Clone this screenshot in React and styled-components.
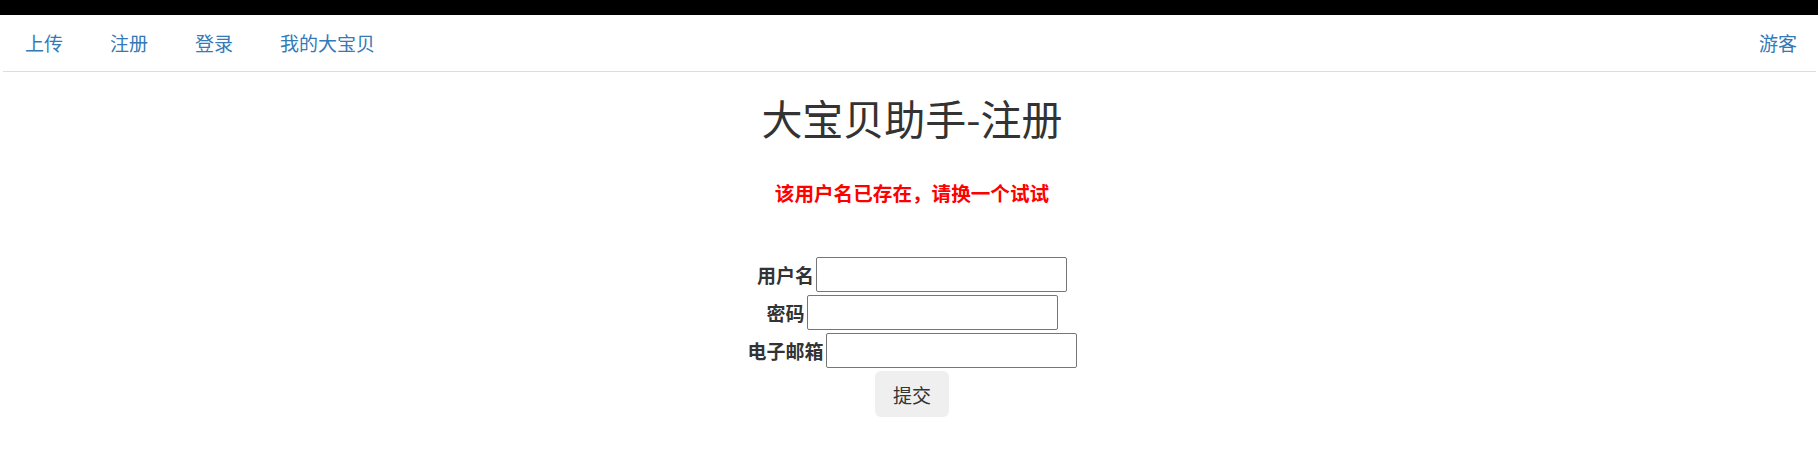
import React from "react";
import styled, { createGlobalStyle } from "styled-components";

const GlobalStyle = createGlobalStyle`
  html, body {
    margin: 0;
    padding: 0;
    background: #ffffff;
  }
  body {
    font-family: "Noto Sans CJK SC", "Liberation Sans", sans-serif;
    color: #333333;
  }
`;

const TopStrip = styled.div`
  height: 15px;
  background: #000000;
`;

const NavBar = styled.nav`
  display: flex;
  align-items: center;
  justify-content: space-between;
  height: 56px;
  margin: 0 2px 0 3px;
  border-bottom: 1px solid #dddddd;
`;

const NavGroup = styled.div`
  display: flex;
  align-items: center;
  gap: 47px;
  padding: ${(p) => (p.right ? "0 19px 0 0" : "0 0 0 22px")};
`;

const NavLink = styled.a`
  font-size: 19px;
  line-height: 24px;
  color: #337ab7;
  text-decoration: none;
  cursor: pointer;
`;

const Main = styled.main`
  display: flex;
  flex-direction: column;
  align-items: center;
  padding-left: 6px;
`;

const Title = styled.h1`
  margin: 22px 0 0;
  font-size: 41px;
  font-weight: 400;
  line-height: 46px;
  color: #333333;
`;

const ErrorText = styled.p`
  margin: 38px 0 0;
  font-size: 19.6px;
  font-weight: 700;
  line-height: 30px;
  color: #ff0000;
`;

const Form = styled.form`
  display: flex;
  flex-direction: column;
  align-items: center;
  gap: 3px;
  margin-top: 49px;
`;

const Row = styled.div`
  display: flex;
  align-items: center;
  height: 35px;
`;

const Label = styled.label`
  font-size: 19px;
  font-weight: 700;
  line-height: 24px;
  color: #333333;
`;

const Input = styled.input`
  box-sizing: border-box;
  width: 251px;
  height: 35px;
  margin: 0 0 0 2px;
  padding: 2px 4px;
  border: 1px solid #767676;
  border-radius: 2px;
  font-size: 16px;
  background: #ffffff;
  outline: none;
`;

const SubmitButton = styled.button`
  box-sizing: border-box;
  width: 74px;
  height: 46px;
  border: none;
  border-radius: 6px;
  background: #efefef;
  color: #333333;
  font-family: "Noto Sans CJK SC", "Liberation Sans", sans-serif;
  font-size: 19px;
  cursor: pointer;
`;

const fields = [
  { label: "用户名", type: "text" },
  { label: "密码", type: "password" },
  { label: "电子邮箱", type: "email" },
];

export default function App() {
  return (
    <>
      <GlobalStyle />
      <TopStrip />
      <NavBar>
        <NavGroup>
          <NavLink>上传</NavLink>
          <NavLink>注册</NavLink>
          <NavLink>登录</NavLink>
          <NavLink>我的大宝贝</NavLink>
        </NavGroup>
        <NavGroup right>
          <NavLink>游客</NavLink>
        </NavGroup>
      </NavBar>
      <Main>
        <Title>大宝贝助手-注册</Title>
        <ErrorText>该用户名已存在，请换一个试试</ErrorText>
        <Form onSubmit={(e) => e.preventDefault()}>
          {fields.map((f) => (
            <Row key={f.label}>
              <Label>{f.label}</Label>
              <Input type={f.type} />
            </Row>
          ))}
          <SubmitButton type="submit">提交</SubmitButton>
        </Form>
      </Main>
    </>
  );
}
